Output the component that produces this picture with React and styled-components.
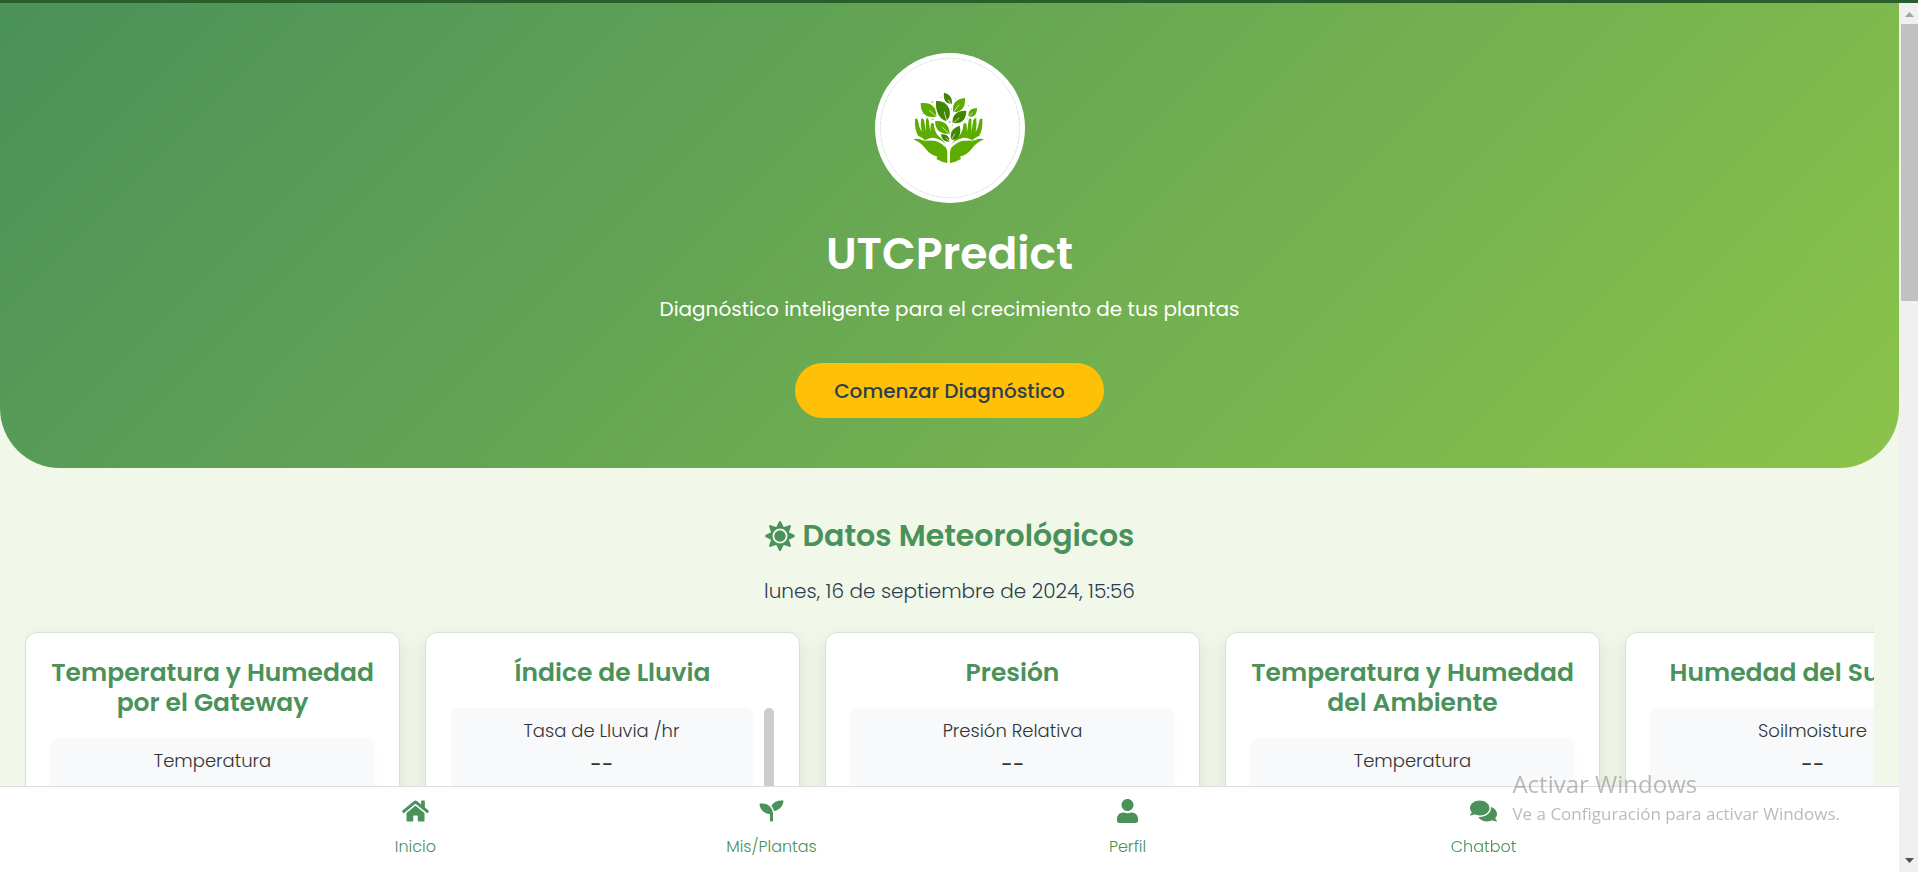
import React from "react";
import styled, { createGlobalStyle } from "styled-components";
import { FaSun, FaHome, FaSeedling, FaUser, FaComments } from "react-icons/fa";

const GlobalStyle = createGlobalStyle`
  *, *::before, *::after { box-sizing: border-box; }
  body {
    margin: 0;
    font-family: Poppins, Inter, "Open Sans", sans-serif;
    background: #f1f8e9;
    color: #2c3e50;
  }
  h1, h2, h3, p, dl, dt, dd { margin: 0; }
`;

const Shell = styled.div`
  display: flex;
  flex-direction: column;
  height: 100vh;
`;

const TopEdge = styled.div`
  flex: none;
  height: 3px;
  background: #285f2b;
`;

const Frame = styled.div`
  display: flex;
  flex: 1;
  min-height: 0;
`;

const Page = styled.div`
  display: flex;
  flex-direction: column;
  flex: 1;
  min-width: 0;
`;

const Content = styled.main`
  flex: 1;
  min-height: 0;
  overflow-y: auto;
  scrollbar-width: none;
  background: #f1f8e9;
`;

const Hero = styled.header`
  display: flex;
  flex-direction: column;
  align-items: center;
  padding: 50px 20px;
  border-radius: 0 0 60px 60px;
  background: linear-gradient(135deg, #4a915a, #8bc34a);
  color: #fff;
  text-align: center;
`;

const LogoBadge = styled.div`
  display: grid;
  width: 150px;
  height: 150px;
  border-radius: 50%;
  background: #fff;
`;

const HeroTitle = styled.h1`
  margin-top: 21px;
  font-size: 44px;
  font-weight: 600;
  line-height: 60px;
`;

const HeroText = styled.p`
  margin-top: 9px;
  font-size: 20px;
  font-weight: 400;
  line-height: 32px;
`;

const StartButton = styled.button`
  margin-top: 38px;
  height: 55px;
  padding: 0 39px;
  border: 0;
  border-radius: 50px;
  background: #ffc107;
  color: #2c3e50;
  font: inherit;
  font-size: 20px;
  font-weight: 500;
  cursor: pointer;
`;

const Weather = styled.section`
  padding: 47px 25px 25px;
`;

const SectionTitle = styled.h2`
  display: flex;
  align-items: center;
  justify-content: center;
  gap: 8px;
  color: #4a915a;
  font-size: 30px;
  font-weight: 600;
  line-height: 42px;
`;

const DateLine = styled.p`
  margin-top: 19px;
  font-size: 20px;
  font-weight: 300;
  line-height: 30px;
  text-align: center;
`;

const CardRow = styled.div`
  display: flex;
  gap: 25px;
  padding: 26px 0 20px;
  overflow-x: auto;
  scrollbar-width: none;
`;

const Card = styled.article`
  flex: none;
  width: 375px;
  height: 400px;
  padding: 25px;
  border: 1px solid #ddd;
  border-radius: 12px;
  background: #fff;
  box-shadow: 0 8px 20px rgba(0, 0, 0, 0.1);
  text-align: center;
`;

const CardTitle = styled.h3`
  margin-bottom: 20px;
  color: #4a915a;
  font-size: 25px;
  font-weight: 600;
  line-height: 30px;
`;

const Readings = styled.div`
  display: flex;
  gap: 12px;
  height: 260px;
  overflow: ${(p) => (p.$scrolls ? "hidden" : "visible")};
`;

const ReadingList = styled.dl`
  display: flex;
  flex-direction: column;
  flex: 1;
  gap: 15px;
`;

const Reading = styled.div`
  padding: 10px;
  border-radius: 8px;
  background: #f8f9fa;
  box-shadow: 0 2px 5px rgba(0, 0, 0, 0.05);
  color: #333;
`;

const ReadingLabel = styled.dt`
  font-size: 18px;
  font-weight: 300;
  line-height: 26px;
`;

const ReadingValue = styled.dd`
  margin-top: 6px;
  font-size: 20px;
  font-weight: 500;
  line-height: 28px;
`;

const ListThumb = styled.div`
  width: 10px;
  height: 150px;
  border-radius: 5px;
  background: #ccc;
`;

const BottomNav = styled.nav`
  display: flex;
  flex: none;
  justify-content: center;
  border-top: 1px solid #ddd;
  background: #fff;
`;

const NavList = styled.div`
  display: grid;
  grid-template-columns: repeat(4, 1fr);
  width: 75%;
`;

const NavLink = styled.a`
  display: flex;
  flex-direction: column;
  align-items: center;
  gap: 11px;
  padding: 12px 0 13px;
  color: #4a915a;
  font-size: 16px;
  font-weight: 300;
  line-height: 25px;
  text-decoration: none;

  svg {
    width: 27px;
    height: 24px;
  }
`;

const Scrollbar = styled.div`
  display: flex;
  flex-direction: column;
  flex: none;
  align-items: flex-end;
  width: 19px;
  background: #f0f0f0;
`;

const ScrollArrow = styled.svg`
  flex: none;
  width: 17px;
  height: 21px;
  fill: ${(p) => p.$tone};
`;

const ScrollTrack = styled.div`
  flex: 1;
  width: 17px;
`;

const ScrollThumb = styled.div`
  height: calc(67% / 2);
  background: #c1c1c1;
`;

const Watermark = styled.aside`
  position: fixed;
  right: 78px;
  bottom: 44px;
  color: rgba(150, 150, 150, 0.65);
  font-family: "Segoe UI", "Open Sans", "Noto Sans", sans-serif;
  font-weight: 400;
  pointer-events: none;
`;

const WatermarkTitle = styled.p`
  font-size: 24px;
  line-height: 32px;
`;

const WatermarkText = styled.p`
  font-size: 17px;
  line-height: 28px;
`;

const hand = (
  <>
    <path d="M160 298 Q172 294 186 301 L216 302 Q234 301 246 312 Q262 322 262 338 V369 Q244 366 229 357 L232 350 Q212 346 198 328 Q182 306 160 298Z" />
    <path d="M165 237 Q171 232 174 242 Q177 263 185 276 Q181 255 183 238 Q187 231 192 240 L198 276 Q197 256 198 238 Q202 231 206 240 L211 277 Q211 262 213 251 Q218 246 222 253 Q222 271 233 286 Q248 298 258 313 Q245 299 231 296 Q213 289 196 301 Q184 291 175 288 Q163 270 165 237Z" />
    <path d="M193 303 Q214 291 232 304 Q245 308 254 319" fill="none" stroke="#fff" strokeWidth="2" />
  </>
);

function Logo() {
  return (
    <svg viewBox="45 39 450 450" width="150" height="150" role="img" aria-label="UTCPredict">
      <circle cx="270" cy="264" r="209" fill="none" stroke="#c4dfc0" strokeWidth="2" strokeDasharray="14 3" />
      <g fill="#5cad00">
        {hand}
        <g transform="translate(532 0) scale(-1 1)">{hand}</g>
        <path d="M182 190 C212 186 230 200 229 230 C202 235 182 224 182 190Z" />
        <path d="M315 174 C317 200 307 216 280 217 C274 190 290 176 315 174Z" />
        <path d="M351 204 C351 222 343 233 325 230 C325 212 332 205 351 204Z" />
        <path d="M225 244 C252 240 268 255 269 282 C242 283 226 272 225 244Z" />
      </g>
      <g fill="#428600">
        <path d="M252 158 C272 163 278 177 275 192 C256 190 249 178 252 158Z" />
        <path d="M228 183 C260 182 275 206 268 231 L259 244 C236 236 226 213 228 183Z" />
        <path d="M319 212 C318 238 307 252 278 249 C275 224 291 211 319 212Z" />
        <path d="M299 257 C305 280 297 300 274 300 C268 278 277 264 299 257Z" />
        <path d="M243 283 C259 280 269 289 268 305 C252 306 245 297 243 283Z" />
      </g>
      <g fill="none" stroke="#fff" strokeWidth="2" strokeLinecap="round">
        <path d="M208 211 L229 230" />
        <path d="M253 216 L260 243" />
        <path d="M297 195 L280 217" />
        <path d="M265 180 L272 192" />
        <path d="M297 234 L278 251" />
        <path d="M247 262 L267 281" />
        <path d="M284 282 L274 300" />
        <path d="M258 294 L267 303" />
        <path d="M337 219 L325 230" />
      </g>
      <g fill="#9acb64">
        <circle cx="217" cy="186" r="3" />
        <circle cx="243" cy="172" r="2" />
        <circle cx="286" cy="176" r="2" />
        <circle cx="326" cy="197" r="2" />
        <circle cx="187" cy="221" r="2" />
        <circle cx="203" cy="234" r="2" />
        <circle cx="218" cy="238" r="3" />
        <circle cx="348" cy="235" r="2" />
        <circle cx="323" cy="236" r="2" />
        <circle cx="269" cy="246" r="3" />
        <circle cx="274" cy="207" r="2" />
        <circle cx="277" cy="257" r="2" />
      </g>
    </svg>
  );
}

const cards = [
  { title: "Temperatura y Humedad por el Gateway", readings: ["Temperatura"] },
  { title: "Índice de Lluvia", readings: ["Tasa de Lluvia /hr"], scrolls: true },
  { title: "Presión", readings: ["Presión Relativa"] },
  { title: "Temperatura y Humedad del Ambiente", readings: ["Temperatura"] },
  { title: "Humedad del Sustrato", readings: ["Soilmoisture"] },
];

const links = [
  { label: "Inicio", href: "#inicio", Icon: FaHome },
  { label: "Mis/Plantas", href: "#plantas", Icon: FaSeedling },
  { label: "Perfil", href: "#perfil", Icon: FaUser },
  { label: "Chatbot", href: "#chatbot", Icon: FaComments },
];

export default function App() {
  return (
    <Shell>
      <GlobalStyle />
      <TopEdge />
      <Frame>
        <Page>
          <Content>
            <Hero>
              <LogoBadge>
                <Logo />
              </LogoBadge>
              <HeroTitle>UTCPredict</HeroTitle>
              <HeroText>Diagnóstico inteligente para el crecimiento de tus plantas</HeroText>
              <StartButton type="button">Comenzar Diagnóstico</StartButton>
            </Hero>
            <Weather>
              <SectionTitle>
                <FaSun aria-hidden="true" />
                Datos Meteorológicos
              </SectionTitle>
              <DateLine>lunes, 16 de septiembre de 2024, 15:56</DateLine>
              <CardRow>
                {cards.map((card) => (
                  <Card key={card.title}>
                    <CardTitle>{card.title}</CardTitle>
                    <Readings $scrolls={card.scrolls}>
                      <ReadingList>
                        {card.readings.map((label) => (
                          <Reading key={label}>
                            <ReadingLabel>{label}</ReadingLabel>
                            <ReadingValue>--</ReadingValue>
                          </Reading>
                        ))}
                      </ReadingList>
                      {card.scrolls && <ListThumb />}
                    </Readings>
                  </Card>
                ))}
              </CardRow>
            </Weather>
          </Content>
          <BottomNav>
            <NavList>
              {links.map(({ label, href, Icon }) => (
                <NavLink key={label} href={href}>
                  <Icon aria-hidden="true" />
                  {label}
                </NavLink>
              ))}
            </NavList>
          </BottomNav>
        </Page>
        <Scrollbar aria-hidden="true">
          <ScrollArrow viewBox="0 0 17 21" $tone="#a3a3a3">
            <path d="M4 14 L8.500 9 L13 14Z" />
          </ScrollArrow>
          <ScrollTrack>
            <ScrollThumb />
          </ScrollTrack>
          <ScrollArrow viewBox="0 0 17 21" $tone="#505050">
            <path d="M4 7 L13 7 L8.500 12Z" />
          </ScrollArrow>
        </Scrollbar>
      </Frame>
      <Watermark>
        <WatermarkTitle>Activar Windows</WatermarkTitle>
        <WatermarkText>Ve a Configuración para activar Windows.</WatermarkText>
      </Watermark>
    </Shell>
  );
}
